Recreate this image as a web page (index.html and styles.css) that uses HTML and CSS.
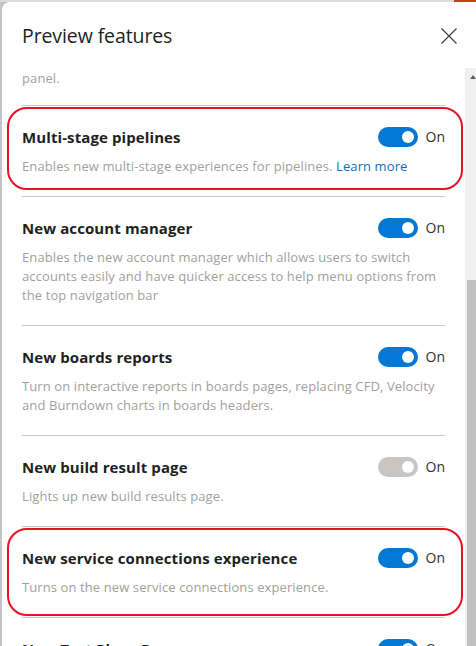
FILE: index.html
```html
<!DOCTYPE html>
<html lang="en">
<head>
<meta charset="utf-8">
<title>Preview features</title>
<link rel="stylesheet" href="styles.css">
</head>
<body>
<div class="panel">
  <header class="panel-header">
    <h1 class="panel-title">Preview features</h1>
    <button class="close-btn" aria-label="Close">
      <svg width="16" height="16" viewBox="0 0 16 16"><path d="M0.5 0.5 L15.5 15.5 M15.5 0.5 L0.5 15.5" stroke="#3b3a39" stroke-width="1.1" fill="none"/></svg>
    </button>
  </header>
  <div class="panel-body">
    <div class="feature-list">
      <div class="feature feature--tail">
        <p class="feature-desc">panel.</p>
      </div>
      <div class="feature feature--highlight feature--hl-a">
        <div class="feature-head">
          <span class="feature-name">Multi-stage pipelines</span>
          <span class="switch"><span class="toggle"><span class="knob"></span></span><span class="toggle-label">On</span></span>
        </div>
        <p class="feature-desc">Enables new multi-stage experiences for pipelines. <a class="link" href="#">Learn more</a></p>
      </div>
      <div class="feature">
        <div class="feature-head">
          <span class="feature-name">New account manager</span>
          <span class="switch"><span class="toggle"><span class="knob"></span></span><span class="toggle-label">On</span></span>
        </div>
        <p class="feature-desc">Enables the new account manager which allows users to switch accounts easily and have quicker access to help menu options from the top navigation bar</p>
      </div>
      <div class="feature">
        <div class="feature-head">
          <span class="feature-name">New boards reports</span>
          <span class="switch"><span class="toggle"><span class="knob"></span></span><span class="toggle-label">On</span></span>
        </div>
        <p class="feature-desc">Turn on interactive reports in boards pages, replacing CFD, Velocity and Burndown charts in boards headers.</p>
      </div>
      <div class="feature">
        <div class="feature-head">
          <span class="feature-name">New build result page</span>
          <span class="switch"><span class="toggle toggle--disabled"><span class="knob"></span></span><span class="toggle-label">On</span></span>
        </div>
        <p class="feature-desc">Lights up new build results page.</p>
      </div>
      <div class="feature feature--highlight feature--hl-b">
        <div class="feature-head">
          <span class="feature-name">New service connections experience</span>
          <span class="switch"><span class="toggle"><span class="knob"></span></span><span class="toggle-label">On</span></span>
        </div>
        <p class="feature-desc">Turns on the new service connections experience.</p>
      </div>
      <div class="feature">
        <div class="feature-head">
          <span class="feature-name">New Test Plans Page</span>
          <span class="switch"><span class="toggle"><span class="knob"></span></span><span class="toggle-label">On</span></span>
        </div>
        <p class="feature-desc">Turns on the new Test Plans page experience.</p>
      </div>
    </div>
    <div class="scrollbar">
      <span class="scroll-arrow"></span>
      <span class="scroll-thumb"></span>
    </div>
  </div>
</div>
</body>
</html>
```
FILE: styles.css
```css
html {
  background: linear-gradient(to right, #dcdcdc 0, #dcdcdc 454px, #c0431d 454px) top left / 100% 2px no-repeat, #c4c4c4;
}
body {
  margin: 0;
  height: 646px;
  overflow: hidden;
  font-family: "Open Sans", "Noto Sans", sans-serif;
  color: #201f1e;
}
.panel {
  margin: 2px 0 0 2px;
  height: 644px;
  background: #fff;
  border-top-left-radius: 8px;
  display: flex;
  flex-direction: column;
  overflow: hidden;
}
.panel-header {
  display: flex;
  align-items: center;
  justify-content: space-between;
  padding: 20px 19px 18px 20px;
  height: 28px;
  flex: none;
}
.panel-title {
  margin: 0;
  font-size: 19.5px;
  font-weight: 400;
  line-height: 28px;
  letter-spacing: -0.1px;
  color: #201f1e;
}
.close-btn {
  border: 0;
  background: none;
  padding: 0;
  width: 16px;
  height: 16px;
  display: flex;
}
.panel-body {
  flex: 1;
  display: flex;
  min-height: 0;
}
.feature-list {
  flex: 1;
  padding: 0 20px;
  overflow: hidden;
}
.feature {
  position: relative;
  border-top: 1px solid #c8c6c4;
  padding: 19px 0 20px;
}
.feature--tail {
  border-top: 0;
  padding: 1px 0 17px;
}
.feature-head {
  display: flex;
  align-items: center;
  justify-content: space-between;
  height: 24px;
}
.feature-name {
  font-size: 15px;
  font-weight: 700;
  letter-spacing: 0.1px;
  color: #201f1e;
}
.feature-desc {
  margin: 8px 0 0;
  font-size: 13px;
  line-height: 19px;
  letter-spacing: 0.1px;
  color: #a19f9d;
}
.feature--tail .feature-desc {
  margin: 0;
}
.link {
  color: #106ebe;
  text-decoration: none;
}
.switch {
  display: flex;
  align-items: center;
  gap: 8px;
}
.toggle {
  width: 40px;
  height: 20px;
  border-radius: 10px;
  background: #0078d4;
  display: flex;
  align-items: center;
  justify-content: flex-end;
  padding-right: 4px;
  box-sizing: border-box;
}
.toggle--disabled {
  background: #c8c6c4;
}
.knob {
  width: 12px;
  height: 12px;
  border-radius: 50%;
  background: #fff;
}
.toggle-label {
  font-size: 14px;
  color: #323130;
  line-height: 20px;
}
.feature--highlight::after {
  content: "";
  position: absolute;
  left: -15px;
  right: -18px;
  top: 1px;
  border: 2px solid #e81123;
  border-radius: 20px;
  pointer-events: none;
}
.feature--hl-a::after {
  bottom: 6px;
}
.feature--hl-b::after {
  bottom: 1px;
}
.scrollbar {
  flex: none;
  width: 11px;
  background: #f0f0f0;
  display: flex;
  flex-direction: column;
  padding-top: 7px;
}
.scroll-arrow {
  width: 0;
  height: 0;
  margin-left: 5px;
  border-left: 3px solid transparent;
  border-right: 3px solid transparent;
  border-bottom: 4px solid #606060;
}
.scroll-thumb {
  margin-top: 201px;
  margin-left: 2px;
  flex: 1;
  background: #c1c1c1;
}
```
